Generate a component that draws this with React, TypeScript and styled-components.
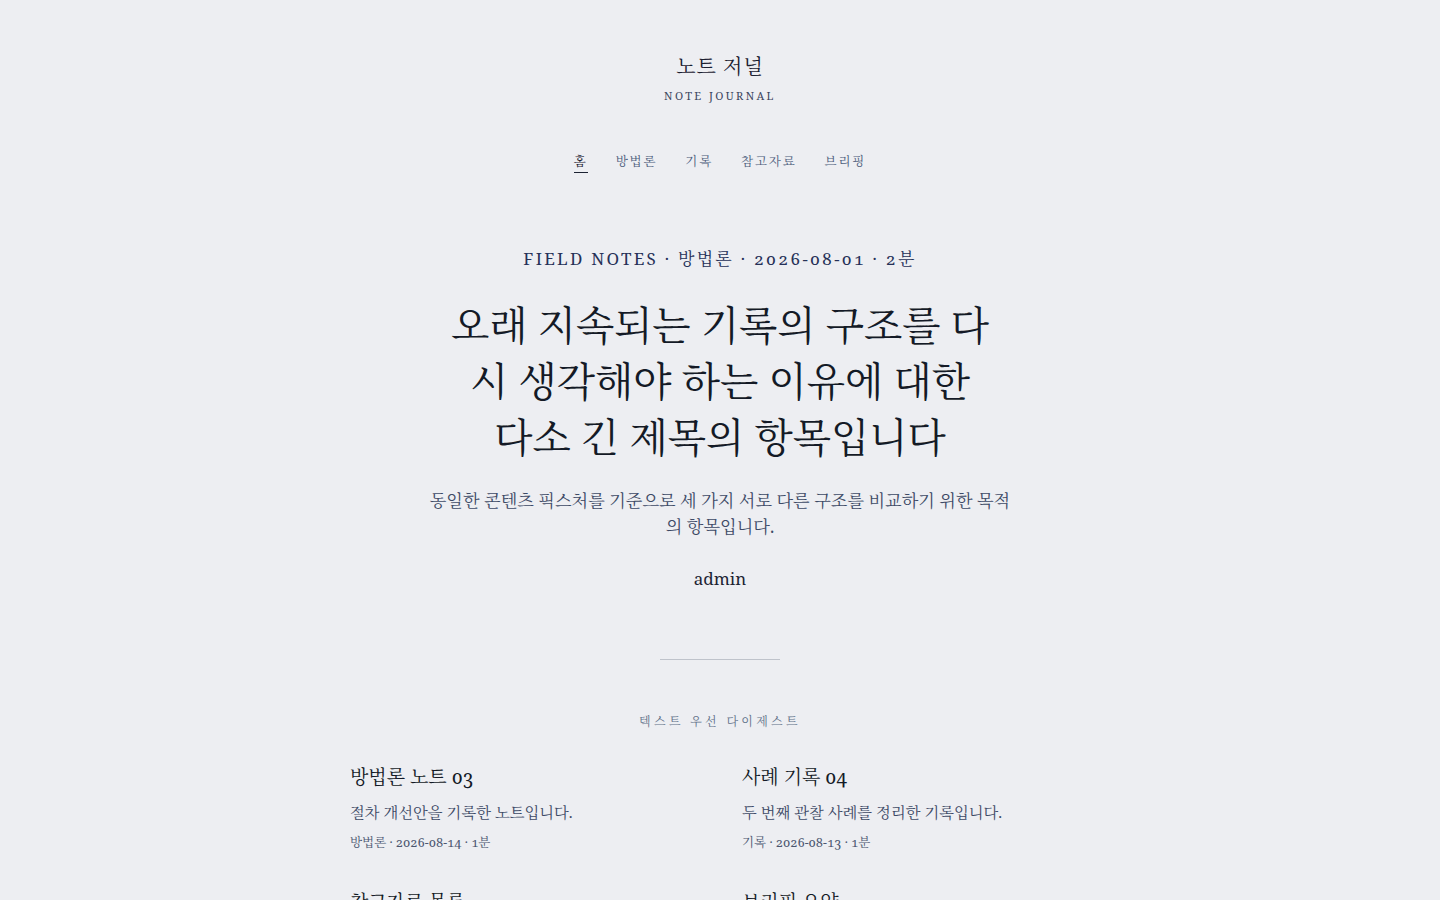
import React from "react";
import styled, { createGlobalStyle } from "styled-components";

const GlobalStyle = createGlobalStyle`
  html, body {
    margin: 0;
    padding: 0;
    background: #edeef2;
  }
  body {
    font-family: "Noto Serif", Georgia, "Noto Serif CJK KR", "Noto Serif KR", "Liberation Serif", "Noto Sans CJK KR", serif;
    color: #1c2333;
    font-variant-numeric: oldstyle-nums;
    -webkit-font-smoothing: antialiased;
  }
  * { box-sizing: border-box; }
`;

const Page = styled.div`
  display: flex;
  flex-direction: column;
  align-items: center;
  padding-top: 52px;
`;

const Masthead = styled.header`
  display: flex;
  flex-direction: column;
  align-items: center;
  gap: 7px;
`;

const SiteTitle = styled.h1`
  margin: 0;
  font-size: 20px;
  font-weight: 400;
  line-height: 30px;
  color: #1a2030;
  letter-spacing: 1px;
`;

const SiteSub = styled.div`
  font-size: 11px;
  letter-spacing: 2.4px;
  color: #3c4660;
  line-height: 14px;
`;

const Nav = styled.nav`
  display: flex;
  gap: 28px;
  margin-top: 50px;
`;

const NavLink = styled.a<{ $active?: boolean }>`
  font-size: 12.5px;
  letter-spacing: 1.8px;
  color: ${(p) => (p.$active ? "#1c2333" : "#4b5b7a")};
  text-decoration: none;
  padding-bottom: 1px;
  border-bottom: 1px solid ${(p) => (p.$active ? "#1c2333" : "transparent")};
  line-height: 18px;
`;

const Hero = styled.section`
  display: flex;
  flex-direction: column;
  align-items: center;
  margin-top: 74px;
  text-align: center;
`;

const Meta = styled.div`
  font-size: 17px;
  letter-spacing: 2.27px;
  color: #263158;
  line-height: 24px;
`;

const Headline = styled.h2`
  margin: 26px 0 0;
  width: 542px;
  font-size: 39.6px;
  font-weight: 400;
  line-height: 56px;
  color: #141a26;
`;

const Lede = styled.p`
  margin: 23px 0 0;
  width: 586px;
  font-size: 17.2px;
  line-height: 26px;
  color: #3d4a66;
`;

const Author = styled.div`
  margin-top: 27px;
  font-size: 17px;
  line-height: 24px;
  color: #1c2333;
`;

const Rule = styled.hr`
  width: 120px;
  border: 0;
  border-top: 1px solid #bfc3cb;
  margin: 68px 0 0;
`;

const SectionLabel = styled.div`
  margin-top: 54px;
  font-size: 12px;
  letter-spacing: 3.3px;
  color: #5f7088;
  line-height: 16px;
`;

const Grid = styled.div`
  display: grid;
  grid-template-columns: 1fr 1fr;
  column-gap: 44px;
  row-gap: 36px;
  width: 740px;
  margin-top: 33px;
`;

const Card = styled.article`
  display: flex;
  flex-direction: column;
`;

const CardTitle = styled.h3`
  margin: 0;
  font-size: 19px;
  font-weight: 400;
  line-height: 28px;
  color: #141a26;
`;

const CardDesc = styled.p`
  margin: 9px 0 0;
  font-size: 15.3px;
  line-height: 24px;
  color: #3d4a66;
`;

const CardMeta = styled.div`
  margin-top: 10px;
  font-size: 12.5px;
  line-height: 18px;
  color: #4b5670;
`;

const navItems = ["홈", "방법론", "기록", "참고자료", "브리핑"];

const cards = [
  { title: "방법론 노트 03", desc: "절차 개선안을 기록한 노트입니다.", meta: "방법론 · 2026-08-14 · 1분" },
  { title: "사례 기록 04", desc: "두 번째 관찰 사례를 정리한 기록입니다.", meta: "기록 · 2026-08-13 · 1분" },
  { title: "참고자료 목록", desc: "참고할 자료를 모아 둔 목록입니다.", meta: "참고자료 · 2026-08-12 · 1분" },
  { title: "브리핑 요약", desc: "주간 브리핑 내용을 요약했습니다.", meta: "브리핑 · 2026-08-11 · 1분" },
];

export default function App() {
  return (
    <>
      <GlobalStyle />
      <Page>
        <Masthead>
          <SiteTitle>노트 저널</SiteTitle>
          <SiteSub>NOTE JOURNAL</SiteSub>
        </Masthead>
        <Nav>
          {navItems.map((n, i) => (
            <NavLink key={n} href="#" $active={i === 0}>
              {n}
            </NavLink>
          ))}
        </Nav>
        <Hero>
          <Meta>FIELD NOTES · 방법론 · 2026-08-01 · 2분</Meta>
          <Headline>오래 지속되는 기록의 구조를 다시 생각해야 하는 이유에 대한 다소 긴 제목의 항목입니다</Headline>
          <Lede>동일한 콘텐츠 픽스처를 기준으로 세 가지 서로 다른 구조를 비교하기 위한 목적의 항목입니다.</Lede>
          <Author>admin</Author>
          <Rule />
          <SectionLabel>텍스트 우선 다이제스트</SectionLabel>
        </Hero>
        <Grid>
          {cards.map((c) => (
            <Card key={c.title}>
              <CardTitle>{c.title}</CardTitle>
              <CardDesc>{c.desc}</CardDesc>
              <CardMeta>{c.meta}</CardMeta>
            </Card>
          ))}
        </Grid>
      </Page>
    </>
  );
}
